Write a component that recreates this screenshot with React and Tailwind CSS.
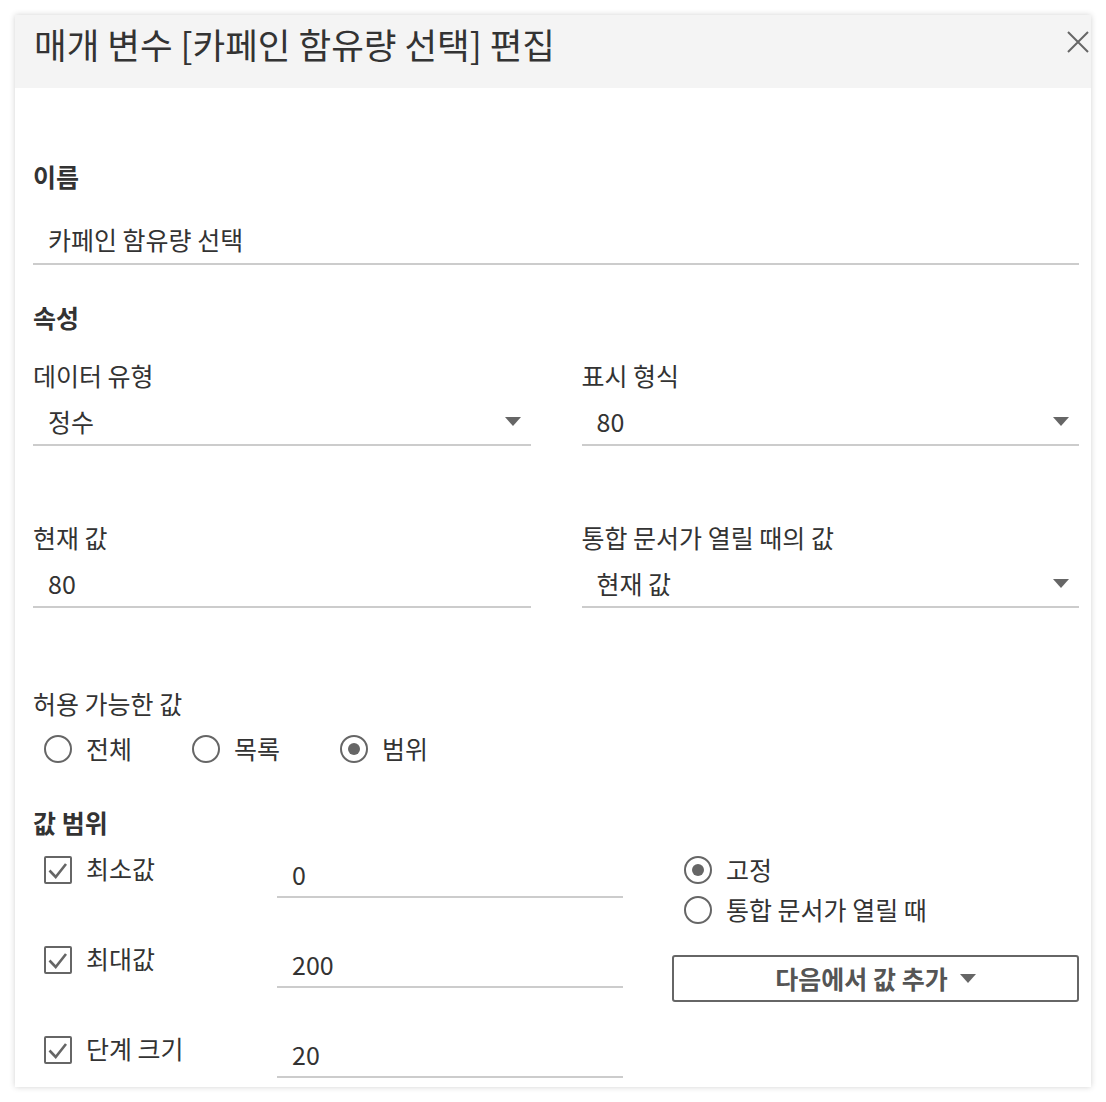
import React from "react";

function Tri() {
  return (
    <svg width="16" height="10" viewBox="0 0 16 10" className="shrink-0">
      <path d="M0 0H16L8 9Z" fill="#666" />
    </svg>
  );
}

function Radio({ on }) {
  return (
    <div className="w-[28px] h-[28px] rounded-full border-2 border-[#666] flex items-center justify-center shrink-0">
      {on && <div className="w-[12px] h-[12px] rounded-full bg-[#666]" />}
    </div>
  );
}

function Check() {
  return (
    <div className="w-[28px] h-[28px] border-2 border-[#666] rounded-[2px] flex items-center justify-center shrink-0">
      <svg width="24" height="24" viewBox="0 0 24 24">
        <path d="M3.5 12.5 L9.7 19 L20 6" fill="none" stroke="#666" strokeWidth="2.6" />
      </svg>
    </div>
  );
}

function Field({ value, dropdown, className = "" }) {
  return (
    <div className={"h-[43px] border-b-2 border-[#cccccc] flex items-start justify-between pl-[15px] pr-[10px] " + className}>
      <span className="leading-[36px]">{value}</span>
      {dropdown && (
        <div className="h-[38px] flex items-center">
          <Tri />
        </div>
      )}
    </div>
  );
}

function Label({ children, bold, className = "" }) {
  return (
    <div className={"h-[30px] leading-[30px] whitespace-nowrap " + (bold ? "font-bold " : "") + className}>
      {children}
    </div>
  );
}

export default function App() {
  return (
    <div className="w-[1106px] h-[1102px] bg-white font-['Noto_Sans_CJK_KR',sans-serif] text-[#333] text-[25px]">
      <div className="relative top-[15px] left-[15px] w-[1076px] h-[1072px] bg-white shadow-[0_0_6px_rgba(0,0,0,0.18)] overflow-hidden">
        {/* header */}
        <div className="h-[73px] bg-[#f4f4f4] flex items-start justify-between pl-[19px] pr-[2px]">
          <div className="pt-[8px] leading-[42px] text-[35.5px] whitespace-nowrap">매개 변수 [카페인 함유량 선택] 편집</div>
          <svg width="22" height="22" viewBox="0 0 22 22" className="mt-[16px]">
            <path d="M1 1L21 21M21 1L1 21" stroke="#666" strokeWidth="2" fill="none" />
          </svg>
        </div>

        {/* body */}
        <div className="pl-[18px] pr-[12px]">
          <Label bold className="mt-[73px]">이름</Label>
          <div className="mt-[30px] h-[44px] border-b-2 border-[#cccccc] pl-[15px]">
            <span className="leading-[36px]">카페인 함유량 선택</span>
          </div>

          <Label bold className="mt-[37px]">속성</Label>

          <div className="grid grid-cols-2 gap-x-[51px] mt-[28px]">
            <div>
              <Label>데이터 유형</Label>
              <Field value="정수" dropdown className="mt-[13px]" />
              <Label className="mt-[76px]">현재 값</Label>
              <Field value="80" className="mt-[13px]" />
            </div>
            <div>
              <Label>표시 형식</Label>
              <Field value="80" dropdown className="mt-[13px]" />
              <Label className="mt-[76px]">통합 문서가 열릴 때의 값</Label>
              <Field value="현재 값" dropdown className="mt-[13px]" />
            </div>
          </div>

          <Label className="mt-[80px]">허용 가능한 값</Label>
          <div className="mt-[13px] h-[36px] flex items-center pl-[11px]">
            {[
              ["전체", false],
              ["목록", false],
              ["범위", true],
            ].map(([t, on]) => (
              <div key={t} className="w-[148px] flex items-center gap-[14px]">
                <Radio on={on} />
                <span>{t}</span>
              </div>
            ))}
          </div>

          <Label bold className="mt-[40px]">값 범위</Label>

          <div className="mt-[11px] flex pl-[11px]">
            <div className="flex flex-col">
              {[
                ["최소값", "0"],
                ["최대값", "200"],
                ["단계 크기", "20"],
              ].map(([t, v]) => (
                <div key={t} className="h-[90px] flex items-start">
                  <div className="w-[233px] flex items-start gap-[14px] pt-[8px]">
                    <Check />
                    <span className="leading-[30px] -mt-[3px]">{t}</span>
                  </div>
                  <div className="w-[346px] mt-[8px] h-[42px] border-b-2 border-[#cccccc] pl-[15px]">
                    <span className="leading-[36px]">{v}</span>
                  </div>
                </div>
              ))}
            </div>
            <div className="ml-[49px] w-[408px] flex flex-col">
              <div className="h-[40px] mt-[2px] flex items-center gap-[14px] pl-[12px]">
                <Radio on />
                <span>고정</span>
              </div>
              <div className="h-[40px] flex items-center gap-[14px] pl-[12px]">
                <Radio />
                <span className="whitespace-nowrap">통합 문서가 열릴 때</span>
              </div>
              <div className="mt-[25px] h-[47px] border-2 border-[#666] rounded-[3px] flex items-center justify-center gap-[12px] font-bold text-[#555]">
                <span>다음에서 값 추가</span>
                <Tri />
              </div>
            </div>
          </div>
        </div>
      </div>
    </div>
  );
}
